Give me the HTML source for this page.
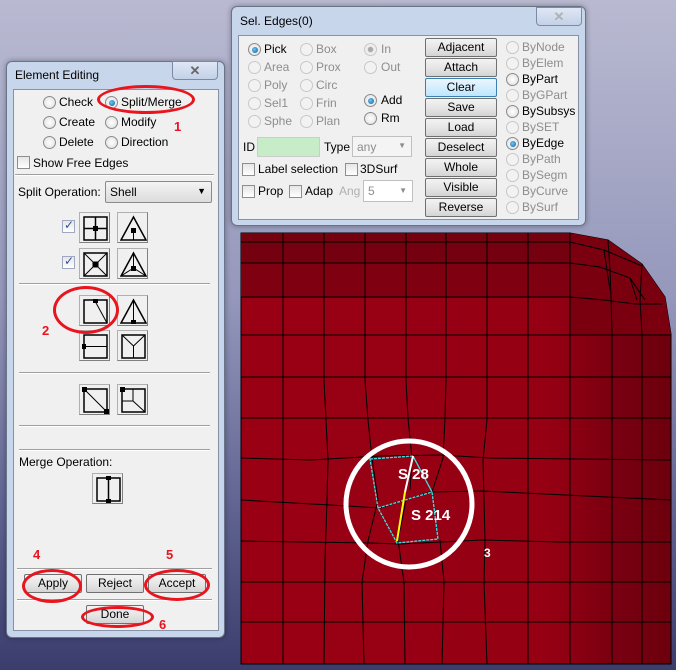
<!DOCTYPE html>
<html><head><style>
*{margin:0;padding:0;box-sizing:border-box}
body{width:676px;height:670px;overflow:hidden;position:relative;font-family:"Liberation Sans",sans-serif;font-size:12px;color:#000;
background:linear-gradient(#b9bad1 0%,#9497bb 45%,#5a5d8c 80%,#3b3d6d 100%)}
.abs{position:absolute}
.dlg{position:absolute;background:#c8d6ec;border:1px solid #6a7488;border-radius:6px;box-shadow:0 0 6px rgba(0,0,0,.35)}
.title{position:absolute;left:8px;top:6px;font-size:12px}
.xbtn{position:absolute;width:46px;height:19px;border:1px solid #7d8aa3;border-radius:0 0 4px 4px;background:linear-gradient(#dfe7f4,#c3d1e8);color:#666;text-align:center;font-weight:bold;font-size:13px;line-height:17px}
.panel{position:absolute;background:#f0f0f0;border:1px solid #8892a6}
.t{position:absolute;white-space:nowrap}
.r{position:absolute;width:13px;height:13px;border-radius:50%;border:1px solid #8b8b8b;background:radial-gradient(#fff,#dcdcdc)}
.r.on::after{content:"";position:absolute;left:2.5px;top:2.5px;width:6px;height:6px;border-radius:50%;background:radial-gradient(circle at 40% 40%,#6cc8f5,#0a5a9c)}
.r.dis{border-color:#c8c8c8;background:#f2f2f2}
.g{color:#8d8d8d}
.c{position:absolute;width:13px;height:13px;border:1px solid #8e8e8e;background:linear-gradient(#e6e6e6,#fff)}
.btn{position:absolute;height:19px;border:1px solid #707070;border-radius:2px;background:linear-gradient(#f3f3f3 0%,#e6e6e6 50%,#d4d4d4 100%);text-align:center;line-height:17px;font-size:12px}
.ib{position:absolute;width:31px;height:31px;border:1px solid #b0b0b0;border-right-color:#808080;border-bottom-color:#808080;background:#f0f0f0}
.ib svg{position:absolute;left:2px;top:2px}
.ib svg path{fill:none}
.hr{position:absolute;height:2px;border-top:1px solid #a0a0a0;border-bottom:1px solid #fff}
.red{position:absolute;border:3px solid #e8141e;border-radius:50%}
.num{position:absolute;color:#e8141e;font-weight:bold;font-size:13px}
</style></head><body>

<svg class="abs" style="left:0;top:0" width="676" height="670">
<defs>
<linearGradient id="hg" x1="0" x2="1" y1="0" y2="0">
<stop offset="0" stop-color="#9a0014"/><stop offset="0.72" stop-color="#950013"/><stop offset="0.86" stop-color="#7a0010"/><stop offset="1" stop-color="#6c000e"/>
</linearGradient>
</defs>
<path d="M241,233 L570,233 L608,240 L642,264 L665,297 L671,334 L671,664 L241,664 Z" fill="url(#hg)" stroke="#000"/>
<rect x="241" y="233" width="330" height="65" fill="#740010"/>
<rect x="241" y="263" width="330" height="35" fill="#7e0011"/>
<path d="M570,233 L608,240 L642,264 L665,297 L671,334 L570,334Z" fill="#7a0010"/>
<g stroke="#000" stroke-width="1" fill="none">
<path d="M241,242H570 M241,263H570 M241,297H570 M241,335H671 M241,377H671 M241,418H671 M241,458L310,460L380,456L440,455L490,458L671,460 M241,500L330,505L380,508L430,492L482,491L671,500 M241,541L371,543L400,544L482,540L560,542L671,542 M241,582L370,582L440,582L671,582 M241,622H671"/>
<path d="M283,233V664 M324,233V380L326,420L328,460L327,500L325,560L324,664 M365,233V380L368,420L372,458L378,500L368,541L362,582L364,664 M406,233V380L408,418L412,458L410,490 M406,500L398,540L404,582L405,664 M446,233V380L445,418L443,458L432,492 M440,540L444,582L442,664 M487,233V420L483,460L484,500L485,540L484,582L487,664 M528,233V664 M570,233V664 M608,240L610,270L611,297L612,334V664 M642,264L640,300L642,334V664"/>
<path d="M570,242L604,250L642,266 M570,263L600,267L630,278L645,300 M570,297L604,300L635,304L662,304 M604,250L610,290 M630,278L637,300"/>
</g>
<g stroke="#3fe0e0" stroke-width="1.3" fill="none" stroke-dasharray="3,1">
<path d="M370,459L413,456L432,492L438,539L397,543L378,508Z M378,508L432,492 M413,456L432,492"/>
</g>
<path d="M413,456L405,492" stroke="#fff" stroke-width="2"/>
<path d="M405,492L397,541" stroke="#ff0" stroke-width="2"/>
<circle cx="409" cy="504" r="63" fill="none" stroke="#fff" stroke-width="5"/>
<text x="398" y="479" fill="#fff" font-family="Liberation Sans" font-weight="bold" font-size="15">S 28</text>
<text x="411" y="520" fill="#fff" font-family="Liberation Sans" font-weight="bold" font-size="15">S 214</text>
<text x="484" y="557" fill="#fff" font-family="Liberation Sans" font-weight="bold" font-size="12">3</text>
</svg>

<div class="dlg" style="left:6px;top:61px;width:219px;height:577px">
<div class="title">Element Editing</div>
<div class="xbtn" style="left:165px;top:-1px">✕</div>
<div class="panel" style="left:6px;top:27px;width:206px;height:542px"></div>
</div>
<div class="r" style="left:43px;top:96px"></div><div class="t" style="left:59px;top:95px">Check</div>
<div class="r on" style="left:105px;top:96px"></div><div class="t" style="left:121px;top:95px">Split/Merge</div>
<div class="r" style="left:43px;top:116px"></div><div class="t" style="left:59px;top:115px">Create</div>
<div class="r" style="left:105px;top:116px"></div><div class="t" style="left:121px;top:115px">Modify</div>
<div class="r" style="left:43px;top:136px"></div><div class="t" style="left:59px;top:135px">Delete</div>
<div class="r" style="left:105px;top:136px"></div><div class="t" style="left:121px;top:135px">Direction</div>
<div class="c" style="left:17px;top:156px"></div><div class="t" style="left:33px;top:156px">Show Free Edges</div>
<div class="hr" style="left:15px;top:174px;width:199px"></div>
<div class="t" style="left:18px;top:185px">Split Operation:</div>
<div class="abs" style="left:105px;top:181px;width:107px;height:22px;border:1px solid #8a8a8a;border-radius:2px;background:linear-gradient(#f4f4f4,#dcdcdc);padding:3px 0 0 4px">Shell<span style="position:absolute;right:5px;top:4px;font-size:9px">▼</span></div>

<div class="c" style="left:62px;top:220px;border-color:#a0a8c0"><span style="position:absolute;left:1px;top:-3px;color:#3050a0;font-size:12px">✓</span></div>
<div class="ib" style="left:79px;top:212px"><svg width="27" height="27"><rect x="2" y="2" width="23" height="23" fill="none" stroke="#000" stroke-width="1.5"/><path d="M13.5,2V25M2,13.5H25" stroke="#000" stroke-width="1.5"/><rect x="11" y="11" width="5" height="5"/></svg></div>
<div class="ib" style="left:117px;top:212px"><svg width="27" height="27"><path d="M13.5,2L26,25H1Z" stroke="#000" stroke-width="1.5"/><path d="M13.5,15V25" stroke="#000"/><rect x="11" y="13" width="5" height="5"/></svg></div>
<div class="c" style="left:62px;top:256px;border-color:#a0a8c0"><span style="position:absolute;left:1px;top:-3px;color:#3050a0;font-size:12px">✓</span></div>
<div class="ib" style="left:79px;top:248px"><svg width="27" height="27"><rect x="2" y="2" width="23" height="23" fill="none" stroke="#000" stroke-width="1.5"/><path d="M2,2L25,25M25,2L2,25" stroke="#000"/><rect x="10.5" y="10.5" width="6" height="6"/></svg></div>
<div class="ib" style="left:117px;top:248px"><svg width="27" height="27"><path d="M13.5,2L26,25H1Z" stroke="#000" stroke-width="1.5"/><path d="M13.5,2V17M1,25L13.5,17L26,25" stroke="#000"/><rect x="11" y="15" width="5" height="5"/></svg></div>
<div class="hr" style="left:19px;top:283px;width:191px"></div>
<div class="ib" style="left:79px;top:295px"><svg width="27" height="27"><rect x="2" y="2" width="23" height="23" fill="none" stroke="#000" stroke-width="1.5"/><path d="M13,3L25,25" stroke="#000"/><rect x="11" y="1" width="5" height="4"/></svg></div>
<div class="ib" style="left:117px;top:295px"><svg width="27" height="27"><path d="M13.5,2L26,25H1Z" stroke="#000" stroke-width="1.5"/><path d="M13.5,2V25" stroke="#000"/><rect x="11" y="22" width="5" height="4"/></svg></div>
<div class="ib" style="left:79px;top:330px"><svg width="27" height="27"><rect x="2" y="2" width="23" height="23" fill="none" stroke="#000" stroke-width="1.5"/><path d="M2,13.5H25" stroke="#000"/><rect x="0" y="11" width="4" height="5"/></svg></div>
<div class="ib" style="left:117px;top:330px"><svg width="27" height="27"><rect x="2" y="2" width="23" height="23" fill="none" stroke="#000" stroke-width="1.5"/><path d="M2,2L13.5,13V25M25,2L13.5,13" stroke="#000"/></svg></div>
<div class="hr" style="left:19px;top:372px;width:191px"></div>
<div class="ib" style="left:79px;top:384px"><svg width="27" height="27"><rect x="2" y="2" width="23" height="23" fill="none" stroke="#000" stroke-width="1.5"/><path d="M2,2L25,25" stroke="#000"/><rect x="0" y="0" width="5" height="5"/><rect x="22" y="22" width="5" height="5"/></svg></div>
<div class="ib" style="left:117px;top:384px"><svg width="27" height="27"><rect x="2" y="2" width="23" height="23" fill="none" stroke="#000" stroke-width="1.5"/><path d="M13,2V14H2M13,14L25,25" stroke="#000"/><rect x="0" y="0" width="5" height="5"/></svg></div>
<div class="hr" style="left:19px;top:425px;width:191px"></div>
<div class="hr" style="left:19px;top:449px;width:191px"></div>
<div class="t" style="left:19px;top:455px">Merge Operation:</div>
<div class="ib" style="left:92px;top:473px"><svg width="27" height="27"><rect x="2" y="2" width="23" height="23" fill="none" stroke="#000" stroke-width="1.5"/><path d="M13.5,2V25" stroke="#000" stroke-width="1.5"/><rect x="11" y="0" width="5" height="4"/><rect x="11" y="23" width="5" height="4"/></svg></div>
<div class="hr" style="left:17px;top:568px;width:195px"></div>
<div class="btn" style="left:24px;top:574px;width:58px">Apply</div>
<div class="btn" style="left:86px;top:574px;width:58px">Reject</div>
<div class="btn" style="left:148px;top:574px;width:58px">Accept</div>
<div class="hr" style="left:17px;top:599px;width:195px"></div>
<div class="btn" style="left:86px;top:605px;width:58px">Done</div>

<div class="red" style="left:97px;top:85px;width:98px;height:29px"></div>
<div class="num" style="left:174px;top:119px">1</div>
<div class="red" style="left:53px;top:286px;width:66px;height:48px"></div>
<div class="num" style="left:42px;top:323px">2</div>
<div class="num" style="left:33px;top:547px">4</div>
<div class="num" style="left:166px;top:547px">5</div>
<div class="red" style="left:22px;top:569px;width:60px;height:34px"></div>
<div class="red" style="left:144px;top:569px;width:66px;height:32px"></div>
<div class="red" style="left:81px;top:606px;width:73px;height:22px"></div>
<div class="num" style="left:159px;top:617px">6</div>

<div class="dlg" style="left:231px;top:6px;width:355px;height:220px">
<div class="title" style="top:7px">Sel. Edges(0)</div>
<div class="xbtn" style="left:304px;top:0px;color:#b0b0b0">✕</div>
<div class="panel" style="left:6px;top:28px;width:341px;height:185px"></div>
</div>
<div class="r on" style="left:248px;top:43px"></div><div class="t" style="left:264px;top:42px">Pick</div>
<div class="r dis" style="left:300px;top:43px"></div><div class="t g" style="left:316px;top:42px">Box</div>
<div class="r dis" style="left:364px;top:43px;background:radial-gradient(#aaa 30%,#eee 40%)"></div><div class="t g" style="left:381px;top:42px">In</div>
<div class="r dis" style="left:248px;top:61px"></div><div class="t g" style="left:264px;top:60px">Area</div>
<div class="r dis" style="left:300px;top:61px"></div><div class="t g" style="left:316px;top:60px">Prox</div>
<div class="r dis" style="left:364px;top:61px"></div><div class="t g" style="left:381px;top:60px">Out</div>
<div class="r dis" style="left:248px;top:79px"></div><div class="t g" style="left:264px;top:78px">Poly</div>
<div class="r dis" style="left:300px;top:79px"></div><div class="t g" style="left:316px;top:78px">Circ</div>
<div class="r dis" style="left:248px;top:97px"></div><div class="t g" style="left:264px;top:96px">Sel1</div>
<div class="r dis" style="left:300px;top:97px"></div><div class="t g" style="left:316px;top:96px">Frin</div>
<div class="r on" style="left:364px;top:94px"></div><div class="t" style="left:381px;top:93px">Add</div>
<div class="r" style="left:364px;top:112px"></div><div class="t" style="left:381px;top:111px">Rm</div>
<div class="r dis" style="left:248px;top:115px"></div><div class="t g" style="left:264px;top:114px">Sphe</div>
<div class="r dis" style="left:300px;top:115px"></div><div class="t g" style="left:316px;top:114px">Plan</div>
<div class="t" style="left:243px;top:140px">ID</div>
<div class="abs" style="left:257px;top:137px;width:63px;height:20px;background:#c6ecc8;border:1px solid #ccc"></div>
<div class="t" style="left:324px;top:140px">Type</div>
<div class="abs g" style="left:352px;top:136px;width:60px;height:21px;border:1px solid #c0c0c0;padding:3px 4px;background:#f4f4f4">any<span style="position:absolute;right:5px;top:4px;font-size:8px">▼</span></div>
<div class="c" style="left:242px;top:163px"></div><div class="t" style="left:258px;top:162px">Label selection</div>
<div class="c" style="left:345px;top:163px"></div><div class="t" style="left:360px;top:162px">3DSurf</div>
<div class="c" style="left:242px;top:185px"></div><div class="t" style="left:258px;top:184px">Prop</div>
<div class="c" style="left:289px;top:185px"></div><div class="t" style="left:305px;top:184px">Adap</div>
<div class="t g" style="left:339px;top:184px;color:#b0b0b0">Ang</div>
<div class="abs g" style="left:363px;top:180px;width:50px;height:22px;border:1px solid #c0c0c0;padding:3px 4px;background:#fff">5<span style="position:absolute;right:5px;top:5px;font-size:8px">▼</span></div>

<div class="btn" style="left:425px;top:38px;width:72px">Adjacent</div>
<div class="btn" style="left:425px;top:58px;width:72px">Attach</div>
<div class="btn" style="left:425px;top:78px;width:72px;border-color:#3c7fb1;background:linear-gradient(#eaf6fd,#bee6fd)">Clear</div>
<div class="btn" style="left:425px;top:98px;width:72px">Save</div>
<div class="btn" style="left:425px;top:118px;width:72px">Load</div>
<div class="btn" style="left:425px;top:138px;width:72px">Deselect</div>
<div class="btn" style="left:425px;top:158px;width:72px">Whole</div>
<div class="btn" style="left:425px;top:178px;width:72px">Visible</div>
<div class="btn" style="left:425px;top:198px;width:72px">Reverse</div>

<div class="r dis" style="left:506px;top:41px"></div><div class="t g" style="left:522px;top:40px">ByNode</div>
<div class="r dis" style="left:506px;top:57px"></div><div class="t g" style="left:522px;top:56px">ByElem</div>
<div class="r" style="left:506px;top:73px"></div><div class="t" style="left:522px;top:72px">ByPart</div>
<div class="r dis" style="left:506px;top:89px"></div><div class="t g" style="left:522px;top:88px">ByGPart</div>
<div class="r" style="left:506px;top:105px"></div><div class="t" style="left:522px;top:104px">BySubsys</div>
<div class="r dis" style="left:506px;top:121px"></div><div class="t g" style="left:522px;top:120px">BySET</div>
<div class="r on" style="left:506px;top:137px"></div><div class="t" style="left:522px;top:136px">ByEdge</div>
<div class="r dis" style="left:506px;top:153px"></div><div class="t g" style="left:522px;top:152px">ByPath</div>
<div class="r dis" style="left:506px;top:169px"></div><div class="t g" style="left:522px;top:168px">BySegm</div>
<div class="r dis" style="left:506px;top:185px"></div><div class="t g" style="left:522px;top:184px">ByCurve</div>
<div class="r dis" style="left:506px;top:201px"></div><div class="t g" style="left:522px;top:200px">BySurf</div>
</body></html>
